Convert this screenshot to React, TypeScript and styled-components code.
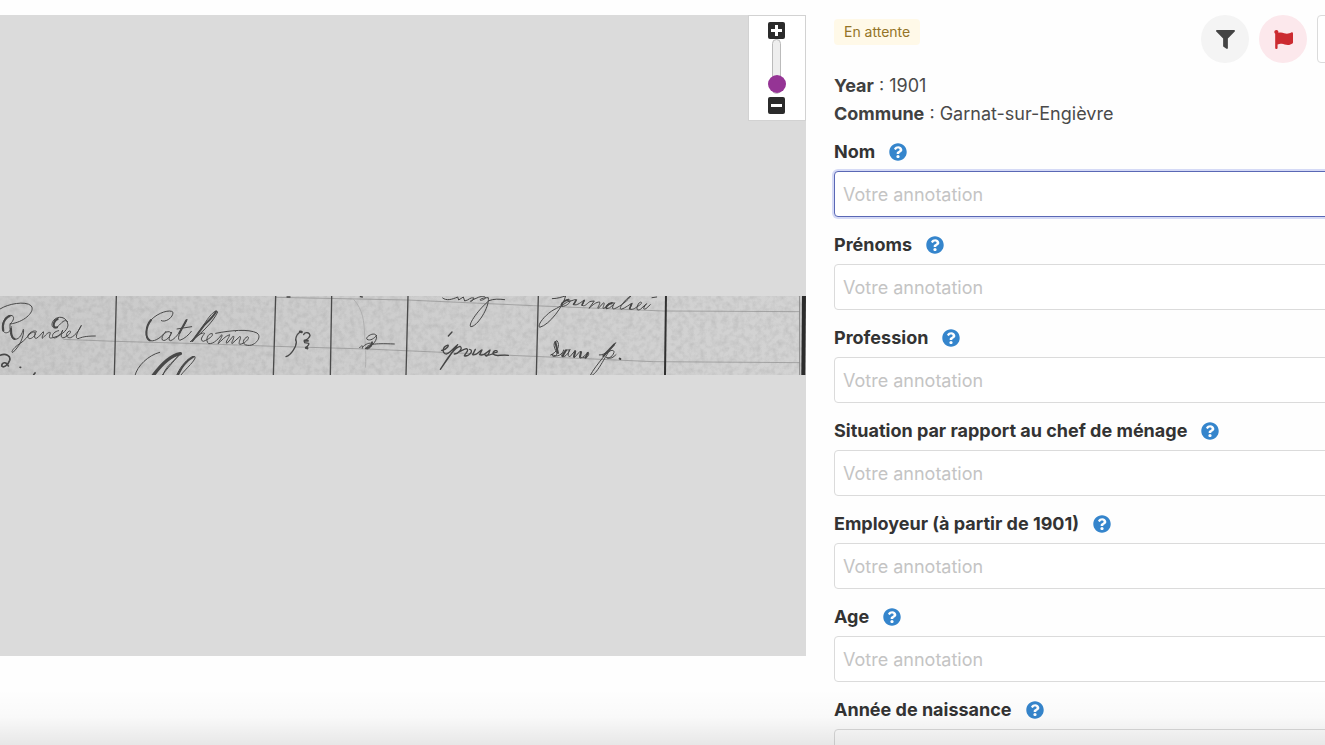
import React from "react";
import styled, { createGlobalStyle, css } from "styled-components";
import { FaFilter, FaFlag, FaQuestionCircle } from "react-icons/fa";

const GlobalStyle = createGlobalStyle`
  *, *::before, *::after { box-sizing: border-box; }
  body {
    margin: 0;
    overflow: hidden;
    background: #fefefe;
    color: #4a4a4a;
    font-family: Inter, "Liberation Sans", sans-serif;
    font-size: 18px;
    line-height: 28px;
  }
`;

const Page = styled.main`
  position: relative;
  height: 100vh;
  overflow: hidden;
`;

/* The workspace is wider than the window, so the form runs past its right edge. */
const Workspace = styled.div`
  display: grid;
  grid-template-columns: minmax(0, 1fr) 591px;
  align-items: start;
  gap: 28px;
  width: calc(100% + 100px);
  padding-top: 15px;
`;

const Viewer = styled.section`
  position: relative;
  display: flex;
  align-items: center;
  height: calc(100vh - 104px);
  background: #dbdbdb;
`;

const Scan = styled.svg`
  display: block;
  width: 100%;
  height: auto;
`;

const ZoomPanel = styled.div`
  position: absolute;
  top: 0;
  right: 0;
  display: flex;
  flex-direction: column;
  align-items: center;
  width: 58px;
  height: 106px;
  padding: 6px 1px 0 0;
  background: #fff;
  border: 1px solid #d2d2d2;
`;

const ZoomButton = styled.button`
  display: block;
  width: 17px;
  height: 17px;
  padding: 0;
  border: 0;
  background: none;

  svg {
    display: block;
  }
`;

const ZoomSlider = styled.input`
  appearance: none;
  writing-mode: vertical-lr;
  direction: rtl;
  width: 18px;
  height: 55px;
  margin: 0 0 3px;
  background: none;

  &::-webkit-slider-runnable-track {
    width: 9px;
    height: 100%;
    margin: 0 auto;
    background: #eee;
    border: 1px solid #bbb;
    border-radius: 5px;
  }

  &::-webkit-slider-thumb {
    appearance: none;
    width: 18px;
    height: 18px;
    margin-left: -5px;
    border: 0;
    border-radius: 50%;
    background: #953495;
  }
`;

const FormPanel = styled.section`
  min-width: 0;
`;

const Header = styled.header`
  display: flex;
  align-items: flex-start;
  justify-content: space-between;
  height: 48px;
  margin-bottom: 9px;
`;

const Tag = styled.span`
  margin-top: 4px;
  padding: 0 10px;
  border-radius: 4px;
  background: #fff9e8;
  color: #947427;
  font-size: 14px;
  line-height: 26px;
`;

const Actions = styled.div`
  display: flex;
  gap: 10px;
`;

const RoundButton = styled.button<{ $danger?: boolean }>`
  display: flex;
  align-items: center;
  justify-content: center;
  width: 48px;
  height: 48px;
  padding: 0;
  border: 0;
  border-radius: 50%;
  font-size: 19px;
  background: ${(p) => (p.$danger ? "#fce8ec" : "#f4f4f4")};
  color: ${(p) => (p.$danger ? "#cc2a30" : "#444")};
`;

const WideButton = styled.button`
  width: 108px;
  height: 48px;
  border: 1px solid #dbdbdb;
  border-radius: 4px;
  background: #fff;
`;

const Metadata = styled.p`
  margin: 0;

  strong {
    font-weight: 700;
    color: #404040;
  }
`;

const Fields = styled.form`
  display: flex;
  flex-direction: column;
  gap: 14px;
  margin-top: 10px;
`;

const Field = styled.div`
  display: flex;
  flex-direction: column;
  gap: 5px;
`;

const LabelRow = styled.div`
  display: flex;
  align-items: center;
  gap: 14px;
`;

const Label = styled.label`
  color: #333;
  font-weight: 700;
`;

const HelpButton = styled.button`
  display: flex;
  padding: 0;
  border: 0;
  background: none;
  color: #3585cc;
  font-size: 18px;
`;

const TextInput = styled.input<{ $active: boolean }>`
  width: 100%;
  height: 46px;
  padding: 0 8px;
  border: 1px solid #dbdbdb;
  border-radius: 4px;
  outline: 0;
  background: #fff;
  color: #363636;
  font: inherit;
  ${(p) =>
    p.$active &&
    css`
      border-color: #5a68b5;
      box-shadow: 0 0 0 2px #d5daf6;
    `}

  &::placeholder {
    color: #c4c4c4;
    opacity: 1;
  }
`;

const BottomShade = styled.div`
  position: absolute;
  inset: auto 0 0;
  height: 56px;
  background: linear-gradient(rgba(0, 0, 0, 0), rgba(0, 0, 0, 0.02) 50%, rgba(0, 0, 0, 0.09));
  pointer-events: none;
`;

const fields = [
  { id: "nom", label: "Nom" },
  { id: "prenoms", label: "Prénoms" },
  { id: "profession", label: "Profession" },
  { id: "situation", label: "Situation par rapport au chef de ménage" },
  { id: "employeur", label: "Employeur (à partir de 1901)" },
  { id: "age", label: "Age" },
  { id: "naissance", label: "Année de naissance" },
];

/* Census register row: ruled paper, column rules and pen strokes. */
function RegisterScan() {
  return (
    <Scan viewBox="0 33 2418 238" role="img" aria-label="Extrait du registre">
      <defs>
        <linearGradient id="paper">
          <stop offset="0" stopColor="#cacaca" />
          <stop offset="0.6" stopColor="#cfcfcf" />
          <stop offset="1" stopColor="#d3d3d3" />
        </linearGradient>
        <filter id="grain" x="0" y="0" width="1" height="1" colorInterpolationFilters="sRGB">
          <feTurbulence type="fractalNoise" baseFrequency="0.06" numOctaves="3" seed="4" />
          <feColorMatrix values="0 0 0 0 0.4  0 0 0 0 0.4  0 0 0 0 0.4  0.3 0 0 0 -0.11" />
        </filter>
      </defs>
      <rect y="33" width="2418" height="238" fill="url(#paper)" />
      <rect y="33" width="2418" height="238" filter="url(#grain)" />

      <g fill="none" stroke="#8c8c8c" strokeWidth="2">
        <path d="M190 163L345 169L600 176L825 184L1100 192L1600 214L1960 230L2400 233" />
        <path d="M825 37L1220 45L1600 62L1990 78L2400 80" />
        <path d="M1060 42C1090 75 1092 110 1094 150C1098 200 1098 225 1096 248" stroke="#b0b0b0" strokeWidth="3" />
      </g>

      <g fill="none" stroke="#4a4a4a" strokeWidth="4">
        <path d="M349 33L343 271M827 33L820 271M995 33L991 271M1224 33L1218 271M1615 33L1609 271" />
        <path d="M1998 33L1995 271" strokeWidth="6" stroke="#303030" />
        <path d="M2399 33L2399 271" strokeWidth="3" stroke="#888" />
        <path d="M2412 33L2410 271" strokeWidth="12" stroke="#2c2c2c" />
      </g>

      <g transform="translate(0 33)" fill="none" stroke="#484848" strokeWidth="3" strokeLinecap="round" strokeLinejoin="round">
        <path d="M0 39C24 23 76 14 93 29C107 44 76 78 30 84C42 74 45 60 33 58C14 57 3 86 9 104C16 118 35 107 34 92M30 84C29 108 32 130 46 130C59 129 66 114 70 100C73 108 67 143 39 169C31 171 39 158 52 148C67 139 76 130 84 120C96 105 107 105 105 116C97 130 81 133 84 118C91 106 104 103 109 106C103 118 101 128 109 127C118 123 125 111 130 107C134 112 123 123 127 127C136 119 145 106 151 110C149 120 144 127 154 126C180 121 203 105 204 87C201 61 173 57 160 74C150 88 160 104 174 91C185 81 193 67 203 77M176 104C161 106 151 121 162 126C174 126 187 109 188 102C182 117 181 127 192 125C204 120 218 106 209 105C196 108 196 128 212 125C228 118 240 98 244 88C232 108 223 127 234 128C245 124 254 120 286 120" />
        <path d="M29 60C14 65 4 88 10 104M33 98C33 115 37 127 44 129M173 69C158 76 157 99 171 94" strokeWidth="6" />
        <path d="M0 178C17 171 33 179 29 193C24 209 10 216 5 210C5 199 19 195 25 210M60 214l2 0M105 231l-4 5" strokeWidth="5" />
      </g>

      <g transform="translate(405 33)" fill="none" stroke="#484848" strokeWidth="3" strokeLinecap="round" strokeLinejoin="round">
        <path d="M79 74C91 81 115 64 114 49C107 39 69 49 48 72C30 93 28 127 45 134C63 138 82 120 93 106M108 110C97 98 76 120 82 132C92 139 109 118 110 108C104 121 97 134 107 134C123 129 148 91 156 70C144 91 122 127 134 133C148 129 162 116 169 106M126 99L170 92M166 137C196 115 234 79 248 48C242 36 219 65 207 86L171 136C184 122 201 107 209 112C202 121 193 133 205 136C220 130 236 120 232 113C219 110 209 134 221 143C237 145 254 124 260 116C265 119 252 135 249 143C260 134 269 121 284 116C284 124 268 140 276 142L295 120C301 124 286 142 291 143L315 121C321 123 308 141 314 145C329 143 347 126 338 122C324 127 318 146 338 148C360 151 383 123 366 111C340 98 287 103 242 112M302 106l3-3" />
        <path d="M48 72C31 92 30 126 44 133M243 47C233 64 218 77 207 88L172 135M154 73L133 111" strokeWidth="6" />
        <path d="M74 169C39 178 7 210 0 238M84 238C92 212 105 207 131 179C149 158 104 208 81 238M125 238C134 213 166 176 180 182C184 192 154 216 137 238" />
        <path d="M55 238C80 204 108 178 136 173" strokeWidth="10" />
        <path d="M129 237C142 207 162 190 174 183" strokeWidth="6" />
      </g>

      <g transform="translate(840 33)" fill="none" stroke="#484848" strokeWidth="4" strokeLinecap="round" strokeLinejoin="round">
        <path d="M21 3l9 0M241 2l6 1" />
        <path d="M60 108C49 116 44 129 49 138C49 151 34 178 18 182M71 116C73 107 89 108 90 119C85 133 69 133 74 140C84 143 88 139 86 146L78 156" />
        <path d="M60 107l5 1M74 134l9 0M78 155l4 2" strokeWidth="7" />
        <path d="M239 155C248 144 250 151 247 157M256 158C277 153 297 128 287 116C277 109 255 124 261 130C271 136 283 127 290 118M247 154C257 142 276 137 276 146C272 158 258 163 259 155C264 146 276 141 343 144" strokeWidth="3" />
        <path d="M259 157C270 153 278 145 276 139" strokeWidth="6" />
      </g>

      <g transform="translate(810 0)" fill="none" stroke="#454545" strokeWidth="4" strokeLinecap="round" strokeLinejoin="round">
        <path d="M518 39C529 48 545 44 563 36L566 45L580 36L584 48C598 45 600 36 612 39C608 53 594 50 605 46L625 37C649 29 652 41 637 45C624 49 629 38 655 38C659 67 621 126 602 125C594 117 627 72 657 47C671 41 689 42 704 44" strokeWidth="3" />
        <path d="M535 153L546 141M515 196C530 195 541 177 531 181C517 186 515 207 530 207C544 200 553 187 563 179L511 253C532 222 550 190 570 184C582 190 562 208 553 207C565 206 579 191 590 191C601 196 579 211 584 213C599 214 612 196 599 193M616 193L608 209C619 213 628 197 636 195L629 209C641 215 652 199 660 195C656 210 650 218 645 210C659 216 671 201 681 202C685 193 668 196 669 207C682 218 689 207 715 211" />
      </g>

      <g transform="translate(1614 33)" fill="none" stroke="#454545" strokeWidth="3" strokeLinecap="round" strokeLinejoin="round">
        <path d="M43 8C61 8 72 2 83 0C76 29 36 86 5 94C-4 88 22 55 48 41C68 31 86 19 91 16M91 10C76 11 63 27 73 31C88 31 105 13 92 10M91 17C103 14 110 10 116 11L106 25C117 32 132 15 140 12L132 28C143 34 149 17 159 16L169 15L153 37C165 26 174 18 185 18C187 26 176 36 181 37L197 20C203 22 190 39 197 37C207 34 213 24 220 21M226 20C212 17 198 33 206 38C217 38 228 24 230 20C221 35 222 41 230 38C247 31 272 12 278 0M278 0C269 3 239 36 249 40C262 37 275 24 283 22L275 39C286 43 294 34 304 28C317 20 308 13 301 24C294 38 296 46 307 40L326 23C315 35 314 43 324 38L337 26M342 5l14-2" />
        <path d="M91 12C78 13 67 25 72 30M114 14L107 25M138 14L132 27M222 22C209 22 202 35 206 37M280 24L275 38" strokeWidth="5" />
        <path d="M38 177C58 168 68 149 57 134C43 139 48 156 56 168C60 182 42 187 42 175C57 187 75 174 77 162M93 162C79 158 68 177 72 182C84 185 95 165 96 160C88 174 89 184 97 181L111 164C118 165 105 181 109 185L126 166C134 167 121 185 127 186C139 185 144 173 151 169C155 176 148 190 136 184M184 177C200 179 224 155 233 140C225 149 170 211 157 238C171 243 195 194 207 176C215 158 230 162 228 169C223 186 206 189 205 184C219 191 226 183 234 176" />
        <path d="M52 138L60 171M84 163L74 180M111 166L108 182M129 168L126 183M149 171L143 185M228 146L196 180M245 188l2 1" strokeWidth="6" />
      </g>
    </Scan>
  );
}

function ZoomIcon({ plus = false }: { plus?: boolean }) {
  return (
    <svg viewBox="0 0 17 17" width="17" height="17" aria-hidden="true">
      <rect width="17" height="17" rx="2" fill="#2b2b2b" />
      <path d={plus ? "M3 8.5H14M8.5 3V14" : "M3 8.5H14"} stroke="#fff" strokeWidth="3" />
    </svg>
  );
}

export default function App() {
  return (
    <Page>
      <GlobalStyle />
      <Workspace>
        <Viewer>
          <RegisterScan />
          <ZoomPanel>
            <ZoomButton type="button" aria-label="Zoom avant">
              <ZoomIcon plus />
            </ZoomButton>
            <ZoomSlider type="range" min="0" max="10" defaultValue="0" aria-label="Zoom" />
            <ZoomButton type="button" aria-label="Zoom arrière">
              <ZoomIcon />
            </ZoomButton>
          </ZoomPanel>
        </Viewer>
        <FormPanel>
          <Header>
            <Tag>En attente</Tag>
            <Actions>
              <RoundButton type="button" aria-label="Filtrer">
                <FaFilter />
              </RoundButton>
              <RoundButton type="button" $danger aria-label="Signaler">
                <FaFlag />
              </RoundButton>
              <WideButton type="button" aria-label="Actions" />
            </Actions>
          </Header>
          <Metadata>
            <strong>Year</strong> : 1901
          </Metadata>
          <Metadata>
            <strong>Commune</strong> : Garnat-sur-Engièvre
          </Metadata>
          <Fields>
            {fields.map((field, index) => (
              <Field key={field.id}>
                <LabelRow>
                  <Label htmlFor={field.id}>{field.label}</Label>
                  <HelpButton type="button" aria-label={`Aide : ${field.label}`}>
                    <FaQuestionCircle />
                  </HelpButton>
                </LabelRow>
                <TextInput
                  id={field.id}
                  type="text"
                  placeholder="Votre annotation"
                  $active={index === 0}
                />
              </Field>
            ))}
          </Fields>
        </FormPanel>
      </Workspace>
      <BottomShade />
    </Page>
  );
}
